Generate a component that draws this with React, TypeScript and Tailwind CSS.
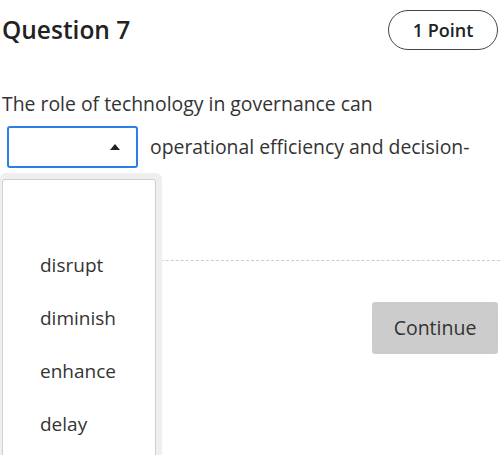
import { useState } from "react";

const options = ["disrupt", "diminish", "enhance", "delay"];

export default function App() {
  const [open] = useState(true);

  return (
    <div className="relative h-[455px] w-[500px] overflow-hidden bg-white font-['Open_Sans',sans-serif] text-[#333]">
      <div className="mt-[10px] flex h-[40px] items-center justify-between pl-[2px] pr-[2px]">
        <h2 className="text-[24.5px] font-semibold text-[#222]">Question 7</h2>
        <span className="flex h-[40px] w-[110px] items-center justify-center rounded-full border border-[#444] text-[18px] font-semibold text-[#222]">
          1 Point
        </span>
      </div>

      <p className="mt-[41px] pl-[2px] text-[19.4px] leading-[26px]">
        The role of technology in governance can
      </p>

      <div className="mt-[9px] flex items-center gap-[12px] pl-[7px]">
        <div className="flex h-[42px] w-[131px] items-center justify-end rounded-[3px] border-2 border-[#2a80e4] pr-[16px]">
          <svg width="10" height="6" viewBox="0 0 10 6">
            <path d="M0 6 L5 0 L10 6 Z" fill="#222" />
          </svg>
        </div>
        <span className="text-[19.4px] leading-[26px]">operational efficiency and decision-</span>
      </div>

      <div className="mt-[92px] border-t border-dashed border-[#ccc]" />

      <div className="mt-[41px] flex justify-end pr-[2px]">
        <button
          type="button"
          className="h-[52px] w-[126px] rounded-[3px] bg-[#cccccc] text-[19.5px] text-[#333]"
        >
          Continue
        </button>
      </div>

      {open ? (
        <div className="absolute left-0 top-[173px] w-[162px] rounded-t-md bg-[#efefef] pl-[2px] pr-[6px] pt-[6px]">
          <ul className="h-[300px] rounded-t-[3px] border border-[#cfcfcf] bg-white pt-[6px]">
            <li className="h-[53px]" />
            {options.map((opt) => (
              <li key={opt} className="flex h-[53px] items-center pl-[37px] text-[19px]">
                {opt}
              </li>
            ))}
          </ul>
        </div>
      ) : null}
    </div>
  );
}
